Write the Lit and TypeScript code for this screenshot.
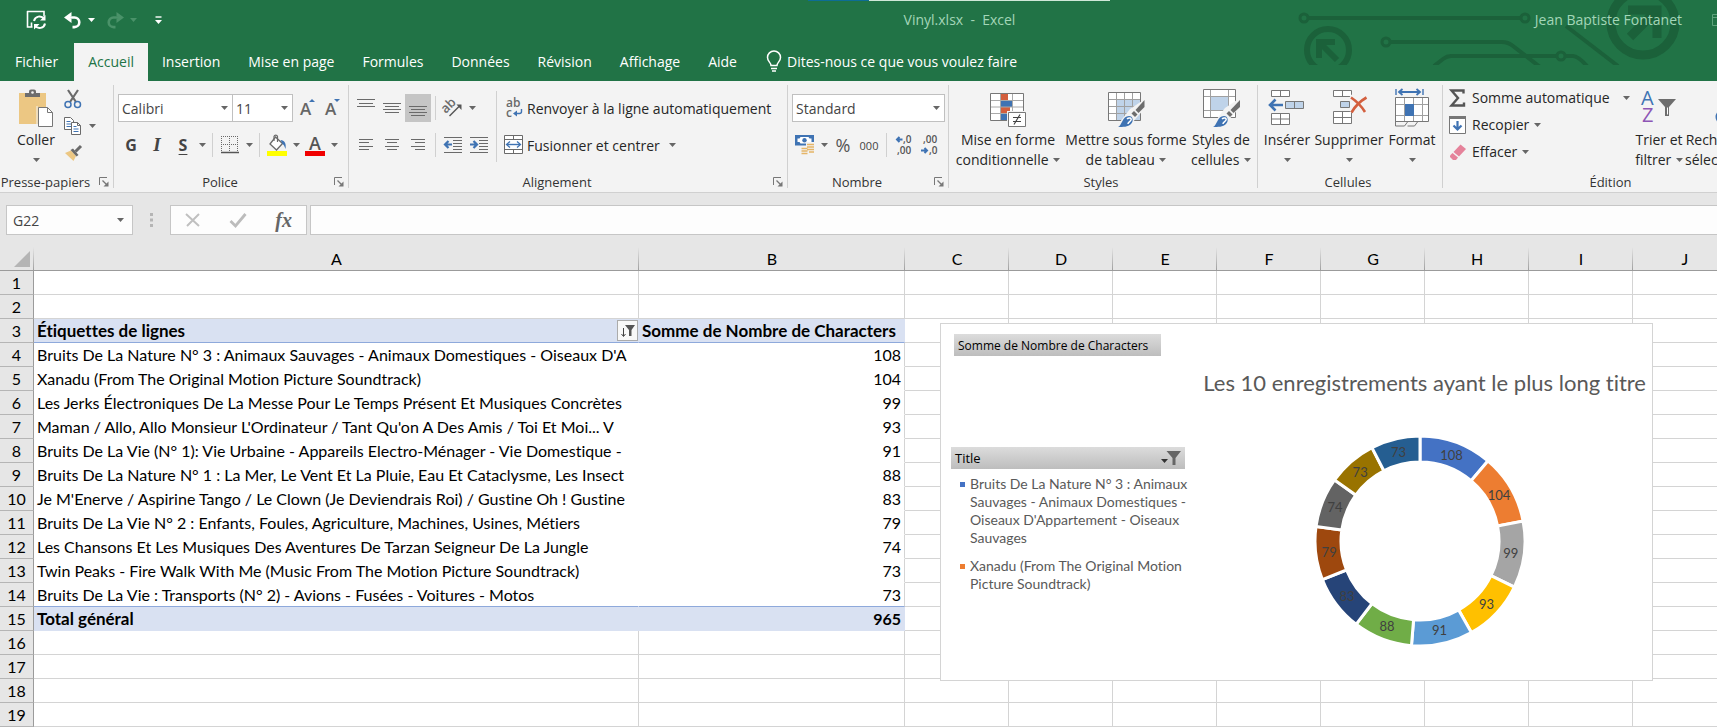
import { LitElement, html, css, svg, nothing } from "lit";
import { customElement } from "lit/decorators.js";
import { classMap } from "lit/directives/class-map.js";

const TABS = ["Fichier", "Accueil", "Insertion", "Mise en page", "Formules", "Données", "Révision", "Affichage", "Aide"];
const COLUMNS = ["A", "B", "C", "D", "E", "F", "G", "H", "I", "J"];
const ROWS: [string, number][] = [
  ["Bruits De La Nature N° 3 : Animaux Sauvages - Animaux Domestiques - Oiseaux D'A", 108],
  ["Xanadu (From The Original Motion Picture Soundtrack)", 104],
  ["Les Jerks Électroniques De La Messe Pour Le Temps Présent Et Musiques Concrètes", 99],
  ["Maman / Allo, Allo Monsieur L'Ordinateur / Tant Qu'on A Des Amis / Toi Et Moi... V", 93],
  ["Bruits De La Vie (N° 1): Vie Urbaine - Appareils Electro-Ménager - Vie Domestique -", 91],
  ["Bruits De La Nature N° 1 : La Mer, Le Vent Et La Pluie, Eau Et Cataclysme, Les Insect", 88],
  ["Je M'Enerve / Aspirine Tango / Le Clown (Je Deviendrais Roi) / Gustine Oh ! Gustine", 83],
  ["Bruits De La Vie N° 2 : Enfants, Foules, Agriculture, Machines, Usines, Métiers", 79],
  ["Les Chansons Et Les Musiques Des Aventures De Tarzan Seigneur De La Jungle", 74],
  ["Twin Peaks - Fire Walk With Me (Music From The Motion Picture Soundtrack)", 73],
  ["Bruits De La Vie : Transports (N° 2) - Avions - Fusées - Voitures - Motos", 73],
];
const COLORS = ["#4472c4", "#ed7d31", "#a5a5a5", "#ffc000", "#5b9bd5", "#70ad47", "#264478", "#9e480e", "#636363", "#997300", "#255e91"];

/* ---------- icons ---------- */
const icon = (w: number, h: number, body: unknown) =>
  html`<svg width=${w} height=${h} viewBox="0 0 ${w} ${h}" fill="none" overflow="visible" aria-hidden="true">${body}</svg>`;

const caret = html`<svg class="caret" width="7" height="4" viewBox="0 0 7 4" aria-hidden="true"><path d="M0 0h7L3.5 4z" fill="currentColor" /></svg>`;

const hlines = (rows: [number, number, number][], color = "#6a6a6a") =>
  rows.map(([x, y, w]) => svg`<path d="M${x} ${y + 0.5}h${w}" stroke=${color} />`);

const I = {
  save: icon(20, 20, svg`<path d="M1 1.500h17v5M1.500 1v16h5M5.500 12.500v4" stroke="#fff" stroke-width="1.600"/><path d="M8 11a5.500 5.500 0 0 1 10-2M19 13.500a5.500 5.500 0 0 1-10 2" stroke="#fff" stroke-width="2"/><path d="M19.500 5v5.500H14zM8 19.500V14h5.500z" fill="#fff"/>`),
  undo: icon(18, 17, svg`<path d="M3 5.500h7.500a4.800 4.800 0 0 1 0 9.600H8.500" stroke="#fff" stroke-width="2.600"/><path d="M7.500 0L0 5.500 7.500 11V7L5 5.500 7.500 4z" fill="#fff"/>`),
  redo: icon(18, 17, svg`<path d="M15 5.500H7.500a4.800 4.800 0 0 0 0 9.600h2" stroke="#4a9269" stroke-width="2.600"/><path d="M10.500 0L18 5.500 10.500 11V7L13 5.500 10.500 4z" fill="#4a9269"/>`),
  customize: icon(7, 8, svg`<path d="M.5 1h6" stroke="#fff" stroke-width="1.400"/><path d="M0 4h7L3.500 8z" fill="#fff"/>`),
  bulb: icon(16, 22, svg`<path d="M5 15.500c0-3-3.500-4-3.500-8a6.500 6.500 0 0 1 13 0c0 4-3.500 5-3.500 8z" stroke="#fff" stroke-width="1.500"/><path d="M5 18.500h6M6 21h4" stroke="#fff" stroke-width="1.400"/>`),
  paste: icon(36, 38, svg`<path d="M1 4h27v31H1z" fill="#ecc783"/><path d="M7 8V4h4V2.500A2 2 0 0 1 13 .5h3a2 2 0 0 1 2 2V4h4v4z" fill="#6d6d6d"/><circle cx="14.500" cy="3.500" r="1.300" fill="#f3f3f3"/><path d="M20.500 18.500h9l5 5v14h-14z" fill="#fff" stroke="#777"/><path d="M29.500 18.500v5h5" stroke="#777"/><path d="M19 17v20" stroke="#f3f3f3"/>`),
  cut: icon(18, 20, svg`<path d="M4 1l8 12M14 1L6 13" stroke="#6a6a6a" stroke-width="2.200"/><circle cx="4" cy="15.500" r="3" stroke="#3f73b3" stroke-width="1.500"/><circle cx="13.500" cy="15.500" r="3" stroke="#3f73b3" stroke-width="1.500"/>`),
  copy: icon(18, 20, svg`<path d="M.5 1.500h6l3 3v9h-9z" fill="#fff" stroke="#6a6a6a"/><path d="M2.500 5.500h4M2.500 8h5M2.500 10.500h5" stroke="#3f73b3"/><path d="M7.500 6.500h6l3 3v9h-9z" fill="#fff" stroke="#6a6a6a"/><path d="M13.500 6.500v3h3" stroke="#6a6a6a"/><path d="M9.500 10.500h3M9.500 13h5M9.500 15.500h5" stroke="#3f73b3"/>`),
  brush: icon(18, 18, svg`<path d="M1 9l6-2.500 5 5.500-2.500 5z" fill="#ecc783"/><path d="M6.500 6l6 6.500 2-1.500-5.500-6.500z" fill="#6a6a6a"/><path d="M11.500 7.500L17 2" stroke="#6a6a6a" stroke-width="3"/>`),
  launcher: icon(10, 10, svg`<path d="M.5 8V.5H8" stroke="#777"/><path d="M3.500 3.500l4 4" stroke="#777" stroke-width="1.200"/><path d="M9.500 4.500v5h-5z" fill="#777"/>`),
  borders: icon(18, 18, svg`<path d="M0 .5h18M0 8.500h18M.5 0v17M8.500 0v17M16.500 0v17" stroke="#6a6a6a" stroke-dasharray="1 1"/><path d="M0 16.500h18" stroke="#555" stroke-width="1.500"/>`),
  bucket: icon(20, 22, svg`<path d="M8.500 3l7 6.500-6 6.500-6.500-6z" fill="#fff" stroke="#6a6a6a" stroke-width="1.300"/><path d="M7 7V2.500a1.800 1.800 0 0 1 3.500 0V8" stroke="#6a6a6a" stroke-width="1.200"/><path d="M13.500 6c4 0 6 3.500 5 9-1-2.500-1.500-4.500-3-5z" fill="#3f73b3"/><path d="M0 17h20v5H0z" fill="#ff0"/>`),
  top: icon(18, 20, svg`${hlines([[0, 1, 18], [2, 5, 14], [0, 8, 18]])}`),
  middle: icon(18, 20, svg`${hlines([[0, 5, 18], [2, 8, 14], [0, 11, 18], [2, 14, 14]])}`),
  bottom: icon(18, 20, svg`${hlines([[0, 8, 18], [2, 11, 14], [0, 14, 18], [2, 17, 14]])}`),
  left: icon(18, 14, svg`${hlines([[2, 1, 14], [2, 4, 10], [2, 8, 14], [2, 11, 10]])}`),
  center: icon(18, 14, svg`${hlines([[2, 1, 14], [4, 4, 10], [2, 8, 14], [4, 11, 10]])}`),
  right: icon(18, 14, svg`${hlines([[2, 1, 14], [6, 4, 10], [2, 8, 14], [6, 11, 10]])}`),
  orientation: icon(20, 20, svg`<g transform="rotate(-45 7 9)"><text x="-1" y="11" font-family="Open Sans, sans-serif" font-size="13" font-weight="600" fill="#6a6a6a">ab</text></g><path d="M6.500 18L16 8.500" stroke="#555" stroke-width="1.500"/><path d="M18.500 6.500v5.500l-5-5.500z" fill="#555"/>`),
  outdent: icon(20, 18, svg`${hlines([[1, 1, 18], [10, 4, 9], [10, 7, 9], [10, 10, 9], [10, 13, 9], [1, 16, 18]])}<path d="M9 8.500H3.500M5.500 5L2 8.500 5.500 12" stroke="#3f73b3" stroke-width="2.200"/>`),
  indent: icon(20, 18, svg`${hlines([[1, 1, 18], [10, 4, 9], [10, 7, 9], [10, 10, 9], [10, 13, 9], [1, 16, 18]])}<path d="M1 8.500h5.500M4.500 5L8 8.500 4.500 12" stroke="#3f73b3" stroke-width="2.200"/>`),
  wrap: icon(20, 20, svg`<g font-family="Open Sans, sans-serif" font-size="12" font-weight="600" fill="#6a6a6a"><text x="2" y="9">ab</text><text x="2" y="19">c</text></g><path d="M17.500 11v2.500a2 2 0 0 1-2 2H11" stroke="#3f73b3" stroke-width="1.400"/><path d="M9 15.500l4-3v6z" fill="#3f73b3"/>`),
  merge: icon(20, 20, svg`<path d="M.5.5h18v18H.5z" fill="#fff" stroke="#6a6a6a"/><path d="M.5 4.500h18M.5 14.500h18M9.500 .5v4M9.500 14.500v4" stroke="#6a6a6a"/><path d="M3 9.500h13" stroke="#3f73b3" stroke-width="1.400"/><path d="M6 6.500l-3.500 3L6 12.500M13 6.500l3.500 3-3.500 3" stroke="#3f73b3" stroke-width="1.300"/>`),
  money: icon(20, 20, svg`<path d="M0 0h19v10.500H0z" fill="#3f73b3"/><path d="M2.500 3.500h2l1-1.500h8l1 1.500h2v3.500h-2l-1 1.500h-8l-1-1.500h-2z" fill="#fff"/><circle cx="9.500" cy="5.200" r="2.200" fill="#3f73b3"/><path d="M11 7h9v12h-4v1H6v-8h5z" fill="#f3f3f3"/><path d="M12 9.500h7M12 12h7M12 14.500h7M6.500 13.500h6M6.500 16h6M6.500 18.500h6M14 17h5" stroke="#e5b567" stroke-width="1.600"/>`),
  decMore: icon(18, 20, svg`<g font-family="Open Sans, sans-serif" font-size="10" font-weight="600" fill="#555"><text x="8" y="8">,0</text><text x="2" y="19">,00</text></g><path d="M7.500 4.500H2.500M4.500 2L2 4.500 4.500 7" stroke="#3f73b3" stroke-width="2"/>`),
  decLess: icon(18, 20, svg`<g font-family="Open Sans, sans-serif" font-size="10" font-weight="600" fill="#555"><text x="2" y="8">,00</text><text x="8" y="19">,0</text></g><path d="M0 15.500h5M3.500 13L6 15.500 3.500 18" stroke="#3f73b3" stroke-width="2"/>`),
  condFormat: icon(38, 38, svg`<path d="M1.500 4.500h33v27h-33z" fill="#fff" stroke="#777"/><path d="M12 5h7v6h-7zM12 18h9v6h-9z" fill="#d35f3e"/><path d="M12 11h11v7H12zM12 25h6v6h-6z" fill="#3f73b3"/><path d="M2 11.500h32M2 18h32M2 24.500h32M11.500 5v26M23.500 5v26" stroke="#aaa"/><path d="M18 22h20v16H18z" fill="#f3f3f3"/><path d="M19.500 23.500h17v14h-17z" fill="#fff" stroke="#777"/><path d="M24 28.500h8M24 32.500h8M31 25.500l-6 10" stroke="#444" stroke-width="1.200"/>`),
  tableFormat: icon(38, 38, svg`<path d="M1.500 3.500h32v28h-32z" fill="#fff"/><path d="M9.500 11h24v20h-24z" fill="#bfd3e9"/><path d="M2 10.500h31M2 17.500h31M2 24.500h31M9.500 4v27M17.500 4v27M25.500 4v27" stroke="#a0a0a0"/><path d="M1.500 3.500h32v28h-32z" stroke="#777"/><path d="M38 10v9l-13 15-8 4H9l14-18z" fill="#f3f3f3"/><path d="M37.500 11v7l-6 6-3-3z" fill="#6d6d6d"/><path d="M27 22l3.500 3.500-2.500 2.500-3.500-3.500z" fill="#6d6d6d"/><path d="M11 38c4-1 4-11 11-11 4 0 5 5 2 8s-8 3-13 3z" fill="#3f73b3"/><path d="M20 30c2-2 5-1 4 1s-3 2-3 4" stroke="#fff" stroke-width="1.500"/>`),
  cellStyles: icon(38, 38, svg`<path d="M1.500.5h32v28h-32z" fill="#fff"/><path d="M9 8h17v13H9z" fill="#bfd3e9"/><path d="M2 7.500h31M2 21.500h31M8.500 1v27M26.500 1v27" stroke="#a0a0a0"/><path d="M1.500.5h32v28h-32z" stroke="#777"/><path d="M38 9v9l-13 15-8 5H9l14-19z" fill="#f3f3f3"/><path d="M38 11v7l-6.500 6-3-3z" fill="#6d6d6d"/><path d="M27 22l3.500 3.500-2.500 2.500-3.500-3.500z" fill="#6d6d6d"/><path d="M11 38c4-1 4-11 11-11 4 0 5 5 2 8s-8 3-13 3z" fill="#3f73b3"/><path d="M20 30c2-2 5-1 4 1s-3 2-3 4" stroke="#fff" stroke-width="1.500"/>`),
  insert: icon(38, 38, svg`<path d="M3.500 1.500h18v6h-18zM3.500 24.500h18v11h-18z" fill="#fff" stroke="#777"/><path d="M12.500 1.500v6M12.500 24.500v11M3.500 30h18" stroke="#777"/><path d="M17.500 12.500h18v7h-18z" fill="#bfd3e9" stroke="#777"/><path d="M26.500 12.500v7" stroke="#777"/><path d="M15 16H3M7.500 10.500L2 16l5.500 5.500" stroke="#3f73b3" stroke-width="2.600"/>`),
  remove: icon(38, 38, svg`<path d="M3.500 1.500h18v6h-18zM3.500 22.500h18v12h-18z" fill="#fff" stroke="#777"/><path d="M12.500 1.500v6M12.500 22.500v12M3.500 28.500h18" stroke="#777"/><path d="M10.500 12.500h9v6h-9z" fill="#bfd3e9" stroke="#777"/><path d="M20 7.500c6 4 10 9 15 16M37 8c-7 4-12 9-16 15" stroke="#f3f3f3" stroke-width="5"/><path d="M21 8.500c6 4 10 8 14 14.500M36.500 8.500c-7 4-11 8-15 15" stroke="#d35f3e" stroke-width="2.600"/>`),
  format: icon(38, 38, svg`<path d="M3 0v6M30 0v6" stroke="#3f73b3" stroke-width="1.400"/><path d="M6 3h21M9.500 0L6 3l3.500 3M23.500 0L27 3l-3.500 3" stroke="#3f73b3" stroke-width="1.800"/><path d="M2.500 8.500h33v24h-33z" fill="#fff" stroke="#777"/><path d="M3 15.500h32M3 26.500h32M11.500 9v23M20.500 9v23M29.500 9v23" stroke="#a0a0a0"/><path d="M12 15h9v12h-9z" fill="#3f73b3"/><path d="M2.500 32v5h9l3-4M14.500 37h7l3-4" stroke="#777"/>`),
  sigma: icon(18, 18, svg`<path d="M14.500 4.500V1.500H2.500L9 9l-6.500 7.500h12.500v-3" stroke="#555" stroke-width="2.400"/>`),
  fill: icon(18, 20, svg`<path d="M.5 1.500h16v17H.5z" fill="#fff" stroke="#777"/><path d="M0 1h17v3H0z" fill="#777"/><path d="M8.500 6v8M4.500 10.500l4 4 4-4" stroke="#3f73b3" stroke-width="2.200"/>`),
  clear: icon(18, 18, svg`<path d="M11.500 1.500L17 6l-7 7.500L4.500 9z" fill="#e5829a"/><path d="M3.500 10L9 14.500l-2 2.500H4L1 14v-1.500z" fill="#e5829a"/>`),
  sort: icon(36, 38, svg`<g font-family="Open Sans, sans-serif" font-size="20"><text x="0" y="16" fill="#3f73b3">A</text><text x="1" y="33" fill="#8d55b5">Z</text></g><path d="M17 10h18l-7 8v9h-4v-9z" fill="#6d6d6d"/><path d="M26.500 18.500v7" stroke="#fff"/>`),
  find: icon(38, 38, svg`<circle cx="11" cy="28" r="6" stroke="#3f73b3" stroke-width="3"/><circle cx="28" cy="28" r="6" stroke="#3f73b3" stroke-width="3"/><path d="M9 22l3-10h5v12M30 22l-3-10h-5v12" stroke="#3f73b3" stroke-width="3"/>`),
  cancel: icon(16, 16, svg`<path d="M1 2l13 12M14 2L2 14" stroke="#c0c0c0" stroke-width="2"/>`),
  accept: icon(18, 16, svg`<path d="M1.500 9l5 5L16.500 2" stroke="#bcbcbc" stroke-width="2.800"/>`),
  grip: icon(3, 14, svg`<path d="M0 0h3v3H0zM0 5.500h3v3H0zM0 11h3v3H0z" fill="#b5b5b5"/>`),
  corner: icon(16, 16, svg`<path d="M16 0v16H0z" fill="#b5b5b5"/>`),
  sortFilter: icon(14, 14, svg`<path d="M2.500 4v8M.5 10l2 2.500 2-2.500" stroke="#444"/><path d="M4 1h10L10.500 6v6H8V6z" fill="#555"/>`),
  chartFilter: icon(20, 16, svg`<path d="M0 9h7L3.500 13z" fill="#333"/><path d="M5.500 1H20L14.500 8v7h-3V8z" fill="#666"/>`),
};

@customElement("ribbon-bar")
export class RibbonBar extends LitElement {
  static styles = css`
    :host { display: block; overflow: hidden; background: #f3f3f3; border-bottom: 1px solid #d0d0d0; }
    .ribbon { display: flex; }
    button { font: inherit; color: inherit; background: none; border: 0; padding: 0; margin: 0; }
    svg { flex: none; }
    .group {
      flex: none; box-sizing: border-box; height: 111px; display: flex; flex-direction: column;
      background: linear-gradient(#d0d0d0, #d0d0d0) right 4px / 1px 103px no-repeat;
    }
    .clipboard { width: 114px; }
    .font { width: 235px; }
    .align { width: 439px; }
    .number { width: 161px; }
    .styles { width: 309px; }
    .cells { width: 185px; }
    .edit { width: 340px; }
    .body { flex: 1; display: flex; padding-left: 4px; }
    .foot { display: flex; align-items: center; height: 18px; margin: 0 5px 1px 0; font-size: 13px; line-height: 18px; color: #333; }
    .foot span { flex: 1; text-align: center; white-space: nowrap; }
    .launch { display: flex; width: 10px; height: 10px; margin-left: 8px; }
    .rows { display: flex; flex-direction: column; gap: 9px; padding-top: 13px; }
    .row { display: flex; align-items: center; height: 28px; }
    .lines { display: flex; flex-direction: column; padding-top: 4px; }
    .edit .lines { padding-top: 3px; }
    .line { display: flex; align-items: center; height: 27px; white-space: nowrap; }
    .ib { display: flex; align-items: center; justify-content: center; width: 26px; height: 28px; flex: none; }
    .ib.on { background: #c5c5c5; }
    .cb { display: flex; align-items: center; justify-content: center; width: 12px; height: 28px; flex: none; }
    .caret { color: #666; }
    .sep { width: 1px; height: 24px; margin: 0 4px; background: #d0d0d0; flex: none; }
    .tall { height: 71px; margin-top: 10px; }
    .big { display: flex; flex-direction: column; align-items: center; padding-top: 8px; line-height: 20px; flex: none; }
    .big svg:first-child { margin-bottom: 3px; }
    .big span { white-space: nowrap; }
    .big .caret { vertical-align: middle; margin-left: 1px; }
    .big .alone { margin: 8px 0 0 0; }
    .w48 { width: 48px; margin-left: 8px; }
    .w50 { width: 50px; }
    .w52 { width: 52px; }
    .w74 { width: 74px; }
    .w64 { width: 64px; }
    .w110 { width: 110px; }
    .w126 { width: 126px; }
    .w92 { width: 92px; }
    .pick { position: relative; display: flex; flex: none; }
    .pick select {
      appearance: none; width: 100%; height: 28px; box-sizing: border-box; border: 1px solid #c0c0c0; border-radius: 0;
      background: #fff; font: inherit; color: #444; padding: 0 16px 0 3px; margin: 0;
    }
    .pick .caret { position: absolute; right: 5px; top: 12px; pointer-events: none; }
    .face { width: 115px; }
    .size { width: 61px; margin-left: -1px; }
    .numfmt { width: 153px; }
    .glyph { font-weight: 700; font-size: 16px; color: #444; }
    .ital { font-family: "Liberation Serif", serif; font-style: italic; font-size: 19px; }
    .under { text-decoration: underline; text-underline-offset: 3px; }
    .grow { position: relative; font-size: 17px; font-weight: 600; color: #666; width: 25px; }
    .grow svg { position: absolute; right: 3px; top: 5px; color: #3f73b3; }
    .first { margin-left: 2px; }
    .ink { flex-direction: column; font-size: 18px; line-height: 16px; font-weight: 600; color: #555; }
    .ink::after { content: ""; width: 20px; height: 5px; background: #f00000; }
    .pct { font-size: 18px; color: #555; }
    .zero { font-size: 11px; color: #444; }
    .cmd { display: flex; align-items: center; gap: 3px; margin-left: 3px; white-space: nowrap; }
    .cmd .caret { margin-left: 6px; }
    .item { display: flex; align-items: center; gap: 5px; white-space: nowrap; }
    .auto { width: 184px; }
    .auto .caret { margin-left: auto; margin-right: 3px; }
  `;

  foot(name: string, launcher = true) {
    return html`<div class="foot"><span>${name}</span>${launcher
      ? html`<button class="launch" aria-label="Options ${name}">${I.launcher}</button>` : nothing}</div>`;
  }
  ib(label: string, content: unknown, extra = "") {
    return html`<button class="ib ${extra}" aria-label=${label}>${content}</button>`;
  }
  cb(label: string) {
    return html`<button class="cb" aria-label="Plus : ${label}">${caret}</button>`;
  }
  pick(label: string, value: string, cls: string) {
    return html`<label class="pick ${cls}"><select aria-label=${label}><option>${value}</option></select>${caret}</label>`;
  }
  big(width: string, art: unknown, first: string, second?: string) {
    return html`<button class="big ${width}">${art}<span>${first}</span>${second
      ? html`<span>${second} ${caret}</span>`
      : html`<svg class="caret alone" width="7" height="4" viewBox="0 0 7 4"><path d="M0 0h7L3.500 4z" fill="currentColor" /></svg>`}</button>`;
  }

  render() {
    const up = html`<svg width="6" height="3" viewBox="0 0 6 3"><path d="M0 3h6L3 0z" fill="currentColor" /></svg>`;
    const down = html`<svg width="6" height="3" viewBox="0 0 6 3"><path d="M0 0h6L3 3z" fill="currentColor" /></svg>`;
    const sep = html`<span class="sep"></span>`;
    return html`
      <div class="ribbon">
        <section class="group clipboard">
          <div class="body">
            ${this.big("w48", I.paste, "Coller")}
            <div class="lines">
              <div class="line">${this.ib("Couper", I.cut)}</div>
              <div class="line">${this.ib("Copier", I.copy)}${this.cb("Copier")}</div>
              <div class="line">${this.ib("Reproduire la mise en forme", I.brush)}</div>
            </div>
          </div>
          ${this.foot("Presse-papiers")}
        </section>
        <section class="group font">
          <div class="body">
            <div class="rows">
              <div class="row">
                ${this.pick("Police", "Calibri", "face")}${this.pick("Taille", "11", "size")}
                ${this.ib("Agrandir", html`A${up}`, "grow")}${this.ib("Réduire", html`A${down}`, "grow")}
              </div>
              <div class="row">
                ${this.ib("Gras", "G", "glyph")}${this.ib("Italique", "I", "glyph ital")}${this.ib("Souligné", "S", "glyph under")}${this.cb("Souligné")}
                ${sep}${this.ib("Bordures", I.borders)}${this.cb("Bordures")}
                ${sep}${this.ib("Remplissage", I.bucket)}${this.cb("Remplissage")}${this.ib("Couleur de police", "A", "ink")}${this.cb("Couleur")}
              </div>
            </div>
          </div>
          ${this.foot("Police")}
        </section>
        <section class="group align">
          <div class="body">
            <div class="rows">
              <div class="row">${this.ib("Aligner en haut", I.top)}${this.ib("Aligner au centre", I.middle)}${this.ib("Aligner en bas", I.bottom, "on")}${sep}${this.ib("Orientation", I.orientation)}${this.cb("Orientation")}</div>
              <div class="row">${this.ib("Gauche", I.left)}${this.ib("Centrer", I.center)}${this.ib("Droite", I.right)}${sep}${this.ib("Diminuer le retrait", I.outdent)}${this.ib("Augmenter le retrait", I.indent)}</div>
            </div>
            <span class="sep tall"></span>
            <div class="rows">
              <div class="row"><button class="cmd">${I.wrap}Renvoyer à la ligne automatiquement</button></div>
              <div class="row"><button class="cmd">${I.merge}Fusionner et centrer${caret}</button></div>
            </div>
          </div>
          ${this.foot("Alignement")}
        </section>
        <section class="group number">
          <div class="body">
            <div class="rows">
              <div class="row">${this.pick("Format de nombre", "Standard", "numfmt")}</div>
              <div class="row">${this.ib("Format comptable", I.money)}${this.cb("Format comptable")}${this.ib("Pourcentage", "%", "pct")}${this.ib("Séparateur de milliers", "000", "zero")}${sep}${this.ib("Ajouter une décimale", I.decMore)}${this.ib("Réduire les décimales", I.decLess)}</div>
            </div>
          </div>
          ${this.foot("Nombre")}
        </section>
        <section class="group styles">
          <div class="body">
            ${this.big("w110", I.condFormat, "Mise en forme", "conditionnelle")}
            ${this.big("w126", I.tableFormat, "Mettre sous forme", "de tableau")}
            ${this.big("w64", I.cellStyles, "Styles de", "cellules")}
          </div>
          ${this.foot("Styles", false)}
        </section>
        <section class="group cells">
          <div class="body">
            ${this.big("w50", I.insert, "Insérer")}${this.big("w74", I.remove, "Supprimer")}${this.big("w52", I.format, "Format")}
          </div>
          ${this.foot("Cellules", false)}
        </section>
        <section class="group edit">
          <div class="body">
            <div class="lines">
              <div class="line"><button class="item first auto">${I.sigma}Somme automatique${caret}</button></div>
              <div class="line"><button class="item first">${I.fill}Recopier${caret}</button></div>
              <div class="line"><button class="item first">${I.clear}Effacer${caret}</button></div>
            </div>
            ${this.big("w52", I.sort, "Trier et", "filtrer")}${this.big("w92", I.find, "Rechercher et", "sélectionner")}
          </div>
          ${this.foot("Édition", false)}
        </section>
      </div>
    `;
  }
}

@customElement("pivot-chart")
export class PivotChart extends LitElement {
  static styles = css`
    :host { display: block; box-sizing: border-box; background: #fff; border: 1px solid #d4d4d4; }
    .chart { display: grid; grid-template-columns: 252px 1fr; column-gap: 8px; }
    button { font: inherit; border: 0; color: #000; background: linear-gradient(#dcdcdc, #bdbdbd); height: 22px; padding: 0 4px; display: flex; align-items: center; }
    .field { width: 207px; margin: 10px 0 91px 13px; font-family: "Open Sans", sans-serif; font-size: 12px; white-space: nowrap; }
    .filter { margin-left: 10px; width: 234px; justify-content: space-between; font-family: "Open Sans", sans-serif; font-size: 13px; }
    .legend { list-style: none; margin: 6px 0 0; padding: 0 0 0 19px; font-size: 14px; line-height: 18px; color: #595959; }
    .legend li { display: grid; grid-template-columns: 5px 1fr; column-gap: 5px; margin-bottom: 10px; }
    .mark { width: 5px; height: 5px; margin-top: 7px; }
    .plot { display: flex; flex-direction: column; align-items: center; }
    h2 { align-self: flex-end; margin: 43px 6px 36px 0; font-size: 22px; line-height: 32px; font-weight: 400; color: #595959; white-space: nowrap; }
    .ring { display: block; margin-right: 14px; }
  `;

  ring() {
    const total = ROWS.reduce((sum, r) => sum + r[1], 0);
    const at = (r: number, a: number) => `${(r * Math.sin(a)).toFixed(2)} ${(-r * Math.cos(a)).toFixed(2)}`;
    let angle = 0;
    const parts = ROWS.map(([, value], i) => {
      const start = angle;
      angle += (value / total) * 2 * Math.PI;
      const mid = (start + angle) / 2;
      const [x, y] = at(91.5, mid).split(" ");
      return {
        slice: svg`<path d="M${at(105, start)}A105 105 0 0 1 ${at(105, angle)}L${at(79, angle)}A79 79 0 0 0 ${at(79, start)}Z" fill=${COLORS[i]} stroke="#fff" stroke-width="3"/>`,
        label: svg`<text x=${x} y=${Number(y) + 5} text-anchor="middle">${value}</text>`,
      };
    });
    return html`<svg class="ring" width="212" height="212" viewBox="-106 -106 212 212" font-size="13" fill="#404040" role="img" aria-label="Anneau">
      ${parts.map((p) => p.slice)}${parts.map((p) => p.label)}
    </svg>`;
  }

  render() {
    return html`
      <div class="chart">
        <div>
          <button class="field">Somme de Nombre de Characters</button>
          <button class="filter">Title ${I.chartFilter}</button>
          <ul class="legend">
            <li><svg class="mark" viewBox="0 0 5 5"><path d="M0 0h5v5H0z" fill="#4472c4" /></svg><span>Bruits De La Nature N° 3 : Animaux Sauvages - Animaux Domestiques - Oiseaux D'Appartement - Oiseaux Sauvages</span></li>
            <li><svg class="mark" viewBox="0 0 5 5"><path d="M0 0h5v5H0z" fill="#ed7d31" /></svg><span>Xanadu (From The Original Motion Picture Soundtrack)</span></li>
          </ul>
        </div>
        <div class="plot">
          <h2>Les 10 enregistrements ayant le plus long titre</h2>
          ${this.ring()}
        </div>
      </div>
    `;
  }
}

@customElement("sheet-grid")
export class SheetGrid extends LitElement {
  static styles = css`
    :host { display: block; position: relative; overflow: hidden; font-family: Lato, sans-serif; font-size: 16px; font-variant-ligatures: none; color: #000; }
    table { table-layout: fixed; border-collapse: separate; border-spacing: 0; width: 1737px; background: #fff; }
    .c-head { width: 34px; }
    .c-a { width: 605px; }
    .c-b { width: 266px; }
    .c-n { width: 104px; }
    th, td { box-sizing: border-box; height: 24px; padding: 0 3px; line-height: 23px; overflow: hidden; white-space: nowrap; font-weight: 400; text-align: left; border-right: 1px solid #d4d4d4; border-bottom: 1px solid #d4d4d4; }
    thead th { background: linear-gradient(#e6e6e6, #a0a0a0) right 0 / 1px 100% no-repeat #e6e6e6; text-align: center; border-right: 0; border-bottom-color: #9b9b9b; }
    .rowhead { background: #e6e6e6; text-align: center; padding: 0; border-right-color: #9b9b9b; border-bottom-color: #b5b5b5; }
    .corner { padding: 0; line-height: 0; text-align: right; }
    .corner svg { margin-right: 4px; }
    .num { text-align: right; }
    .plain { border-color: #fff; }
    .b.plain { border-right-color: #d4d4d4; }
    .strong { font-weight: 700; font-size: 17px; background: #d9e1f2; border-right-color: #d9e1f2; border-bottom-color: #8ea9db; }
    .strong.num { font-size: 16px; }
    .total { border-bottom-color: #d9e1f2; }
    .plain.last { border-bottom-color: #8ea9db; }
    .flexcell { display: flex; justify-content: space-between; align-items: center; }
    .menu { display: flex; align-items: center; justify-content: center; width: 21px; height: 21px; margin-right: -3px; padding: 0; border: 1px solid #ababab; background: #f8f8f8; }
    pivot-chart { position: absolute; left: 940px; top: 76px; width: 713px; height: 358px; }
  `;

  cells(n: number) {
    if (n === 3) return html`<td class="strong"><div class="flexcell">Étiquettes de lignes<button class="menu" aria-label="Filtrer">${I.sortFilter}</button></div></td><td class="strong b">Somme de Nombre de Characters</td>`;
    if (n === 15) return html`<td class="strong total">Total général</td><td class="strong total num b">965</td>`;
    if (n > 3 && n < 15) {
      const [title, value] = ROWS[n - 4];
      const last = n === 14;
      return html`<td class=${classMap({ plain: true, last })}>${title}</td><td class=${classMap({ plain: true, num: true, b: true, last })}>${value}</td>`;
    }
    return html`<td></td><td></td>`;
  }

  render() {
    const rows = Array.from({ length: 19 }, (_, i) => i + 1);
    return html`
      <table>
        <colgroup><col class="c-head" /><col class="c-a" /><col class="c-b" />${COLUMNS.slice(2).map(() => html`<col class="c-n" />`)}</colgroup>
        <thead><tr><th class="corner">${I.corner}</th>${COLUMNS.map((c) => html`<th scope="col">${c}</th>`)}</tr></thead>
        <tbody>
          ${rows.map((n) => html`<tr><th class="rowhead" scope="row">${n}</th>${this.cells(n)}${COLUMNS.slice(2).map(() => html`<td></td>`)}</tr>`)}
        </tbody>
      </table>
      <pivot-chart></pivot-chart>
    `;
  }
}

@customElement("app-root")
export class AppRoot extends LitElement {
  static styles = css`
    :host { display: block; overflow: hidden; background: #e6e6e6; font-family: "Open Sans", "Noto Sans", sans-serif; font-size: 14px; color: #262626; }
    button { font: inherit; color: inherit; background: none; border: 0; padding: 0; margin: 0; }
    .green { position: relative; background: #217346; color: #fff; }
    .deco { position: absolute; right: 0; top: 0; overflow: hidden; }
    .strip { position: absolute; left: 808px; top: 0; width: 302px; height: 1px; background: linear-gradient(90deg, #0d6d95 61px, #cfe8d8 61px); }
    .title { position: relative; display: grid; grid-template-columns: 202px 1fr; align-items: start; height: 43px; }
    .quick { display: flex; align-items: center; padding-left: 26px; height: 40px; color: #fff; }
    .quick button { display: flex; }
    .undo { margin-left: 18px; }
    .more { margin-left: 6px; }
    .quick .more .caret { color: #fff; }
    .dim { color: #4a9269; margin-left: 6px; }
    .redo { margin-left: 11px; }
    .custom { margin-left: 18px; }
    .names { display: grid; grid-template-columns: 1fr auto 1fr; align-items: center; height: 39px; color: #a3d6b8; white-space: pre; }
    .user { display: flex; justify-content: flex-end; align-items: center; gap: 30px; overflow: hidden; }
    .tabs { position: relative; display: flex; height: 38px; padding-left: 1px; }
    .tab { padding: 0 14px 2px; height: 38px; white-space: nowrap; }
    .tab:first-child { margin-right: 2px; }
    .tab.active { background: #f3f3f3; color: #217346; }
    .tell { display: flex; align-items: center; gap: 5px; margin-left: 15px; padding-bottom: 2px; white-space: nowrap; }
    .formula { display: flex; height: 30px; padding: 12px 0 12px 6px; }
    .namebox { position: relative; width: 127px; display: flex; }
    .namebox input { width: 100%; box-sizing: border-box; border: 1px solid #c6c6c6; background: #fdfdfd; padding: 0 20px 0 6px; font: inherit; color: #444; }
    .namebox button { position: absolute; right: 7px; top: 9px; display: flex; width: 9px; height: 12px; align-items: center; color: #666; }
    .grip { display: flex; align-items: center; justify-content: center; width: 37px; }
    .actions { display: flex; align-items: center; justify-content: space-around; width: 137px; box-sizing: border-box; border: 1px solid #c6c6c6; background: #fdfdfd; margin-right: 3px; }
    .actions button { display: flex; align-items: center; }
    .actions .fx { font: italic 700 20px "Liberation Serif", serif; color: #666; }
    .bar { flex: 1; min-width: 0; border: 1px solid #c6c6c6; border-right: 0; background: #fdfdfd; padding: 0 6px; font: inherit; }
  `;

  deco() {
    return html`<svg class="deco" width="420" height="65" viewBox="1297 0 420 65" fill="none" stroke="#1b613a" stroke-width="4" aria-hidden="true">
      <circle cx="1304" cy="18" r="4" stroke-width="3" /><path d="M1308 18h213" /><circle cx="1525" cy="18" r="4" stroke-width="3" />
      <circle cx="1328" cy="50" r="21" stroke-width="6" /><path d="M1319 58V42h16M1320 43l17 17" stroke-width="6" />
      <circle cx="1386" cy="42" r="4" stroke-width="3" /><path d="M1390 42h112q6 0 11 4l27 21" />
      <path d="M1434 66l9-7q4-3 8-3h105" /><circle cx="1561" cy="56" r="4" stroke-width="3" /><path d="M1565 56h8q5 0 14 10" />
      <path d="M1566 26l52 40" />
      <circle cx="1643" cy="23" r="32" stroke-width="9" /><path d="M1628 10h29v28M1656 11l-26 26" stroke-width="9" />
    </svg>`;
  }

  render() {
    return html`
      <header class="green">
        ${this.deco()}
        <div class="strip"></div>
        <div class="title">
          <div class="quick">
            <button aria-label="Enregistrer">${I.save}</button>
            <button class="undo" aria-label="Annuler">${I.undo}</button><button class="more" aria-label="Historique">${caret}</button>
            <button class="redo" aria-label="Rétablir">${I.redo}</button><button class="dim" aria-label="Historique de rétablissement">${caret}</button>
            <button class="custom" aria-label="Personnaliser">${I.customize}</button>
          </div>
          <div class="names"><span></span><span>Vinyl.xlsx  -  Excel</span><span class="user">Jean Baptiste Fontanet${icon(5, 12, svg`<path d="M5 .5H.5v11H5M.5 3.500H5" stroke="#5fa37c"/>`)}</span></div>
        </div>
        <nav class="tabs">
          ${TABS.map((t) => html`<button class=${classMap({ tab: true, active: t === "Accueil" })}>${t}</button>`)}
          <button class="tell">${I.bulb}Dites-nous ce que vous voulez faire</button>
        </nav>
      </header>
      <ribbon-bar></ribbon-bar>
      <div class="formula">
        <div class="namebox"><input aria-label="Zone Nom" value="G22" /><button aria-label="Liste des noms">${caret}</button></div>
        <div class="grip">${I.grip}</div>
        <div class="actions"><button aria-label="Annuler">${I.cancel}</button><button aria-label="Entrer">${I.accept}</button><button class="fx" aria-label="Insérer une fonction">fx</button></div>
        <input class="bar" aria-label="Barre de formule" />
      </div>
      <sheet-grid></sheet-grid>
    `;
  }
}
